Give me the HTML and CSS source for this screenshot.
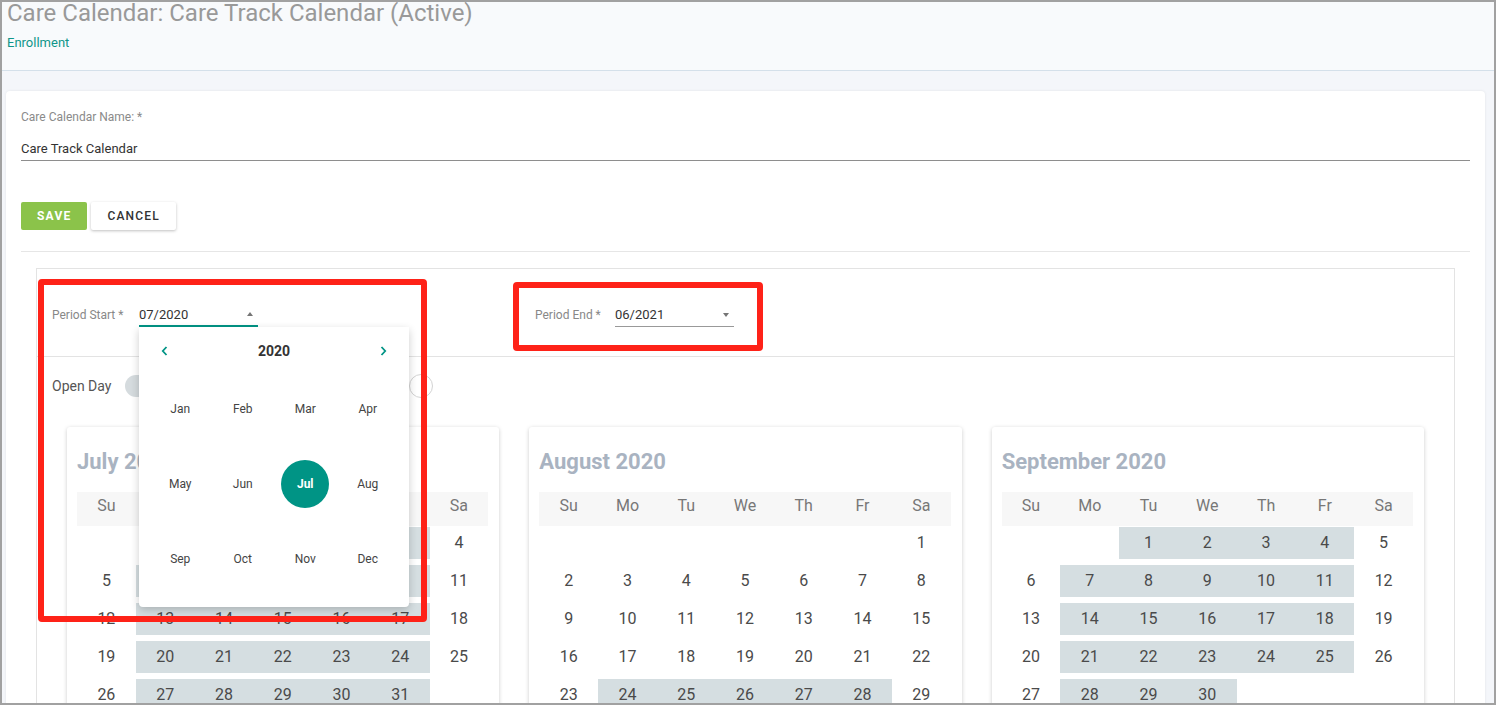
FILE: index.html
```html
<!DOCTYPE html>
<html lang="en">
<head>
    <meta charset="UTF-8">
    <meta name="viewport" content="width=device-width, initial-scale=1.0">
    <title>Care Calendar</title>
    <link rel="stylesheet" href="styles.css">
</head>
<body>
<div class="frame">
    <header class="page-header">
        <h1 class="page-title">Care Calendar: Care Track Calendar (Active)</h1>
        <a class="crumb" href="#">Enrollment</a>
    </header>

    <main class="page-body">
        <section class="card">
            <label class="field-label">Care Calendar Name: *</label>
            <div class="text-input">Care Track Calendar</div>

            <div class="actions">
                <button class="btn btn-save">Save</button>
                <button class="btn btn-cancel">Cancel</button>
            </div>

            <hr class="divider">

            <div class="calendar-box">
                <div class="period-row">
                    <div class="period-field period-start">
                        <span class="period-label">Period Start *</span>
                        <div class="select select-open">
                            <span class="select-value">07/2020</span>
                            <span class="caret caret-up"></span>

                            <div class="month-picker">
                                <div class="picker-head">
                                    <svg class="chev" width="7" height="10" viewBox="0 0 7 10"><path d="M5.5 1 L1.8 5 L5.5 9" /></svg>
                                    <span class="picker-year">2020</span>
                                    <svg class="chev" width="7" height="10" viewBox="0 0 7 10"><path d="M1.5 1 L5.2 5 L1.5 9" /></svg>
                                </div>
                                <div class="picker-grid">
                                    <span>Jan</span><span>Feb</span><span>Mar</span><span>Apr</span>
                                    <span>May</span><span>Jun</span><span><b class="picked">Jul</b></span><span>Aug</span>
                                    <span>Sep</span><span>Oct</span><span>Nov</span><span>Dec</span>
                                </div>
                            </div>
                        </div>
                    </div>

                    <div class="period-field period-end">
                        <span class="period-label">Period End *</span>
                        <div class="select">
                            <span class="select-value">06/2021</span>
                            <span class="caret"></span>
                        </div>
                    </div>
                </div>

                <div class="legend">
                    <div class="legend-item">
                        <span class="legend-text">Open Day</span>
                        <span class="swatch-pill"></span>
                    </div>
                    <span class="swatch-circle"></span>
                </div>

                <div class="months" id="months"></div>
            </div>
        </section>
    </main>

    <!-- annotation boxes from the screenshot -->
    <div class="annot annot-start"></div>
    <div class="annot annot-end"></div>
</div>

<script>
var months = [
    { title: 'July 2020', start: 3, days: 31, open: function (d) { return true; } },
    { title: 'August 2020', start: 6, days: 31, open: function (d) { return d >= 24 && d <= 28; } },
    { title: 'September 2020', start: 2, days: 30, open: function (d) { return true; } }
];
var dayNames = ['Su', 'Mo', 'Tu', 'We', 'Th', 'Fr', 'Sa'];
var wrap = document.getElementById('months');

months.forEach(function (m) {
    var card = document.createElement('div');
    card.className = 'month';
    var html = '<h2 class="month-title">' + m.title + '</h2><div class="week-head">';
    dayNames.forEach(function (n) { html += '<span>' + n + '</span>'; });
    html += '</div>';

    var day = 1 - m.start;
    while (day <= m.days) {
        html += '<div class="week">';
        for (var i = 0; i < 7; i++, day++) {
            var inMonth = day >= 1 && day <= m.days;
            var cls = (inMonth && i > 0 && i < 6 && m.open(day)) ? 'day open' : 'day';
            html += '<span class="' + cls + '">' + (inMonth ? day : '') + '</span>';
        }
        html += '</div>';
    }
    card.innerHTML = html;
    wrap.appendChild(card);
});
</script>
</body>
</html>
```

FILE: styles.css
```css
html, body {
    margin: 0;
    padding: 0;
}
body {
    font-family: Roboto, "Liberation Sans", sans-serif;
    color: #333;
}
.frame {
    position: relative;
    width: 1496px;
    height: 705px;
    box-sizing: border-box;
    border: 2px solid #a1a1a1;
    overflow: hidden;
    background: #f4f6fa;
}

/* header */
.page-header {
    height: 68px;
    padding: 0 5px;
    background: #f8fafc;
    border-bottom: 1px solid #d4e0ea;
}
.page-title {
    margin: 0;
    font-size: 24px;
    line-height: 22px;
    font-weight: 400;
    color: #999;
}
.crumb {
    display: block;
    margin-top: 11px;
    font-size: 13px;
    line-height: 16px;
    color: #10968a;
    text-decoration: none;
}

/* body card */
.page-body {
    padding: 20px 9px 0 4px;
}
.card {
    background: #fff;
    border-radius: 4px;
    box-shadow: 0 0 3px rgba(0, 0, 0, 0.08);
    padding: 19px 15px 0;
    height: 640px;
}
.field-label {
    display: block;
    font-size: 12px;
    line-height: 14px;
    color: #8a8a8a;
}
.text-input {
    margin-top: 17px;
    font-size: 13px;
    line-height: 16px;
    padding-bottom: 3px;
    border-bottom: 1px solid #8e8e8e;
    color: #333;
}
.actions {
    display: flex;
    gap: 4px;
    margin-top: 41px;
}
.btn {
    height: 28px;
    padding: 0 16px;
    border: none;
    border-radius: 2px;
    font-family: inherit;
    font-size: 12px;
    letter-spacing: 1.2px;
    text-transform: uppercase;
    cursor: pointer;
}
.btn-save {
    background: #8bc34a;
    color: #fff;
    font-weight: 700;
}
.btn-cancel {
    background: #fff;
    color: #333;
    font-weight: 500;
    box-shadow: 0 1px 3px rgba(0, 0, 0, 0.25);
}
.divider {
    margin: 21px 0 0;
    border: 0;
    border-top: 1px solid #e6e6e6;
}

/* calendar box */
.calendar-box {
    margin: 16px 15px 0;
    border: 1px solid #e3e3e3;
    border-bottom: none;
    height: 500px;
}
.period-row {
    display: flex;
    align-items: flex-end;
    height: 88px;
    box-sizing: border-box;
    padding: 0 15px 29px;
    border-bottom: 1px solid #e3e3e3;
}
.period-field {
    display: flex;
    align-items: baseline;
}
.period-start {
    flex: 0 0 483px;
}
.period-label {
    font-size: 12px;
    color: #888;
}
.period-start .period-label {
    width: 87px;
}
.period-end .period-label {
    width: 80px;
}
.select {
    position: relative;
    display: flex;
    align-items: center;
    width: 119px;
    padding: 5px 0 3px;
    border-bottom: 1px solid #999;
    font-size: 13px;
    line-height: 16px;
    color: #333;
}
.select-open {
    padding-bottom: 2px;
    border-bottom: 2px solid #009485;
}
.select-value {
    flex: 1;
}
.caret {
    width: 0;
    height: 0;
    margin-right: 5px;
    border-left: 3.5px solid transparent;
    border-right: 3.5px solid transparent;
    border-top: 4px solid #757575;
}
.caret-up {
    border-top: none;
    border-bottom: 4px solid #757575;
    margin-bottom: 2px;
}

/* month picker popup */
.month-picker {
    position: absolute;
    top: calc(100% + 2px);
    left: 0;
    z-index: 10;
    width: 270px;
    height: 280px;
    box-sizing: border-box;
    background: #fff;
    border-radius: 0 0 4px 4px;
    box-shadow: 0 3px 8px rgba(0, 0, 0, 0.2);
}
.picker-head {
    display: flex;
    align-items: center;
    justify-content: space-between;
    height: 40px;
    padding: 4px 22px 0;
}
.chev path {
    fill: none;
    stroke: #009485;
    stroke-width: 1.8;
}
.picker-year {
    font-size: 14px;
    font-weight: 700;
    color: #333;
}
.picker-grid {
    display: grid;
    grid-template-columns: repeat(4, 1fr);
    grid-auto-rows: 75px;
    padding: 0 10px;
}
.picker-grid span {
    display: flex;
    align-items: center;
    justify-content: center;
    font-size: 12px;
    color: #444;
}
.picked {
    display: flex;
    align-items: center;
    justify-content: center;
    width: 48px;
    height: 48px;
    border-radius: 50%;
    background: #009485;
    color: #fff;
    font-weight: 700;
}

/* legend */
.legend {
    display: flex;
    align-items: center;
    padding: 17px 15px 0;
}
.legend-item {
    display: flex;
    align-items: center;
    width: 357px;
}
.legend-text {
    font-size: 14px;
    line-height: 22px;
    color: #555;
}
.swatch-pill {
    width: 44px;
    height: 22px;
    margin-left: 14px;
    border-radius: 11px;
    background: #d5dbde;
}
.swatch-circle {
    width: 22px;
    height: 22px;
    border: 1px solid #d3d3d3;
    border-radius: 50%;
    background: #fff;
}

/* month cards */
.months {
    display: grid;
    grid-template-columns: repeat(3, 1fr);
    gap: 30px;
    padding: 0 30px;
    margin-top: 29px;
}
.month {
    background: #fff;
    border-radius: 3px;
    box-shadow: 0 1px 4px rgba(0, 0, 0, 0.2);
    padding: 20px 11px 20px 10px;
}
.month-title {
    margin: 0;
    font-size: 22px;
    line-height: 30px;
    font-weight: 700;
    color: #a9b3c1;
}
.week-head,
.week {
    display: grid;
    grid-template-columns: repeat(7, 1fr);
    text-align: center;
    font-size: 16px;
}
.week-head {
    margin-top: 15px;
    background: #f7f7f7;
    color: #777;
}
.week-head span {
    line-height: 28px;
    padding-bottom: 6px;
}
.week {
    margin-top: 6px;
    color: #4a4a4a;
}
.week-head + .week {
    margin-top: 1px;
}
.day {
    height: 32px;
    line-height: 31px;
}
.day.open {
    background: #d5dee1;
}

/* red annotation frames */
.annot {
    position: absolute;
    box-sizing: border-box;
    border: 6px solid #fe2218;
    border-radius: 4px;
    z-index: 20;
}
.annot-start {
    left: 36px;
    top: 277px;
    width: 389px;
    height: 343px;
}
.annot-end {
    left: 511px;
    top: 280px;
    width: 250px;
    height: 69px;
}
```
